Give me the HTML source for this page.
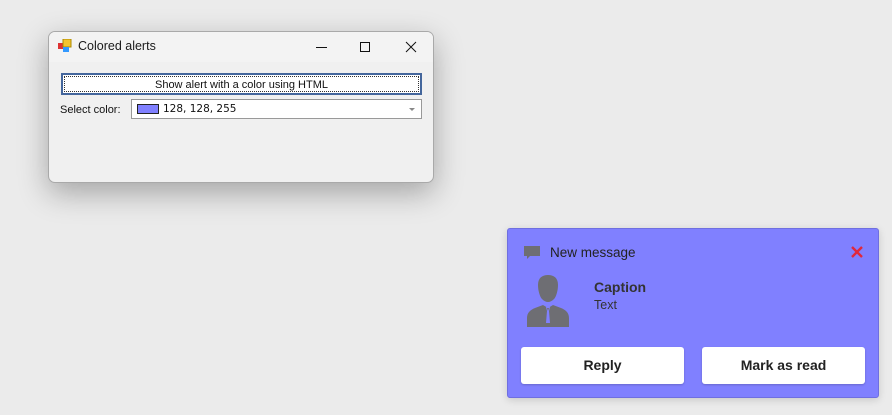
<!DOCTYPE html>
<html><head><meta charset="utf-8"><style>
*{margin:0;padding:0;box-sizing:border-box}
body{width:892px;height:415px;background:#ebebeb;position:relative;overflow:hidden;font-family:"Liberation Sans",sans-serif}
.win{position:absolute;left:48px;top:31px;width:386px;height:152px;background:#f0f0f0;border:1px solid #a9a9a9;border-radius:7px;box-shadow:0 10px 30px rgba(0,0,0,.3);overflow:hidden}
.tb{height:30px;background:#f3f3f3;position:relative;font-size:12.5px;color:#1a1a1a}
.tb .t{position:absolute;left:29px;top:7px}
.btn{position:absolute;left:12px;top:41px;width:361px;height:22px;background:#fff;border:2px solid #44669c;font-size:11px;text-align:center;line-height:20px;color:#111}
.btn:after{content:"";position:absolute;inset:1px;border:1px dotted #333}
.lbl{position:absolute;left:11px;top:72px;font-size:11px;color:#111}
.cb{position:absolute;left:82px;top:67px;width:291px;height:20px;background:#fff;border:1px solid #999;font-size:11px;color:#111}
.sw{position:absolute;left:5px;top:4px;width:22px;height:10px;background:#8080ff;border:1px solid #222}
.cb .v{position:absolute;left:31px;top:3px;font-family:"DejaVu Sans",sans-serif;font-size:10.5px}
.cb .a{position:absolute;right:6px;top:8px;border-left:3px solid transparent;border-right:3px solid transparent;border-top:3px solid #888}
.al{position:absolute;left:507px;top:228px;width:372px;height:170px;background:#8080ff;border:1px solid #6f6fe0;border-radius:3px;box-shadow:0 2px 8px rgba(0,0,0,.15);font-family:"Liberation Sans",sans-serif;color:#222}
.hd{position:absolute;left:42px;top:16px;font-size:13.5px}
.cap{position:absolute;left:86px;top:50px;font-size:14px;font-weight:bold;color:#333}
.txt{position:absolute;left:86px;top:69px;font-size:12.5px;color:#333}
.b{position:absolute;top:118px;width:163px;height:37px;background:#fff;border-radius:3px;text-align:center;line-height:37px;font-size:14px;font-weight:bold;color:#222;box-shadow:0 1px 2px rgba(0,0,0,.2)}
</style></head><body>
<div class="win">
 <div class="tb">
  <svg style="position:absolute;left:9px;top:7px" width="14" height="14"><rect x="0" y="4" width="6" height="6" fill="#d33"/><rect x="5" y="0" width="8" height="8" fill="#f4c430" stroke="#a80"/><rect x="5" y="8" width="6" height="5" fill="#39f"/></svg>
  <span class="t">Colored alerts</span>
  <svg style="position:absolute;left:266px;top:8px" width="120" height="14" fill="none" stroke="#111" stroke-width="1"><path d="M1 7.5h11"/><rect x="45.5" y="2.5" width="9" height="9"/><path d="M91 2l10 10M101 2l-10 10"/></svg>
 </div>
 <div class="btn">Show alert with a color using HTML</div>
 <div class="lbl">Select color:</div>
 <div class="cb"><div class="sw"></div><span class="v">128, 128, 255</span><div class="a"></div></div>
</div>
<div class="al">
 <svg style="position:absolute;left:16px;top:17px" width="17" height="14"><path d="M0 0h16v10H6l-3 3v-3H0z" fill="#6e6e73"/></svg>
 <div class="hd">New message</div>
 <svg style="position:absolute;left:343px;top:17px" width="12" height="12" stroke="#e0283c" stroke-width="2.4"><path d="M1 1l10 10M11 1L1 11"/></svg>
 <svg style="position:absolute;left:19px;top:46px" width="42" height="52" fill="#6e6e73"><path d="M11 10c0-7 4-10 10-10s10 3 10 10c0 6-2 12-4 14-2 2-4 3-6 3s-4-1-6-3c-2-2-4-8-4-14z"/><path d="M0 52v-9c0-5 3-8 8-10l8-3 5 3 5-3 8 3c5 2 8 5 8 10v9z"/><path d="M19 32h4l-1 4 1 12h-4l1-12z" fill="#8080ff"/><path d="M20 33h2l-1 3z" fill="#6e6e73"/></svg>
 <div class="cap">Caption</div>
 <div class="txt">Text</div>
 <div class="b" style="left:13px">Reply</div>
 <div class="b" style="left:194px">Mark as read</div>
</div>
</body></html>
